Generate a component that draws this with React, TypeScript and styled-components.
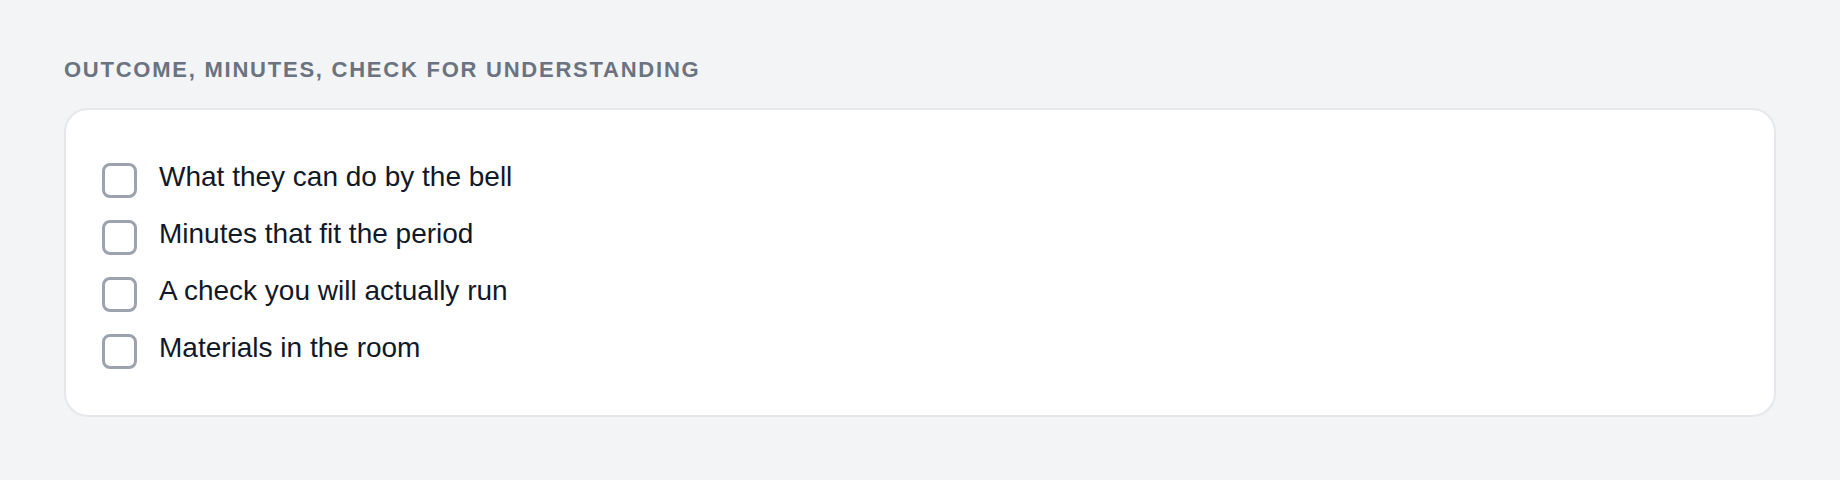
import React from "react";
import styled, { createGlobalStyle } from "styled-components";

const GlobalStyle = createGlobalStyle`
  html, body {
    margin: 0;
    padding: 0;
    background: #f3f4f6;
    font-family: "Liberation Sans", Arial, Helvetica, sans-serif;
  }
`;

const Page = styled.main`
  min-height: 480px;
  box-sizing: border-box;
  padding: 58px 64px 0 64px;
  background: #f3f4f6;
`;

const Heading = styled.h2`
  margin: 0 0 26px 0;
  font-size: 22px;
  line-height: 24px;
  font-weight: 700;
  letter-spacing: 0.08em;
  text-transform: uppercase;
  color: #6b7280;
`;

const Card = styled.section`
  background: #ffffff;
  border: 2px solid #e5e7eb;
  border-radius: 24px;
  padding: 47px 36px 46px 36px;
`;

const List = styled.ul`
  list-style: none;
  margin: 0;
  padding: 0;
  display: flex;
  flex-direction: column;
  gap: 16px;
`;

const Row = styled.li`
  display: flex;
  align-items: flex-start;
  gap: 22px;
`;

const Box = styled.span`
  box-sizing: border-box;
  flex: 0 0 auto;
  width: 35px;
  height: 35px;
  margin-top: 6px;
  border: 3.5px solid #9ca3af;
  border-radius: 8px;
  background: #ffffff;
`;

const Label = styled.span`
  font-size: 28px;
  line-height: 40px;
  color: #111827;
`;

const items = [
  "What they can do by the bell",
  "Minutes that fit the period",
  "A check you will actually run",
  "Materials in the room",
];

export default function App() {
  return (
    <>
      <GlobalStyle />
      <Page>
        <Heading>Outcome, minutes, check for understanding</Heading>
        <Card>
          <List>
            {items.map((t) => (
              <Row key={t}>
                <Box role="checkbox" aria-checked="false" />
                <Label>{t}</Label>
              </Row>
            ))}
          </List>
        </Card>
      </Page>
    </>
  );
}
